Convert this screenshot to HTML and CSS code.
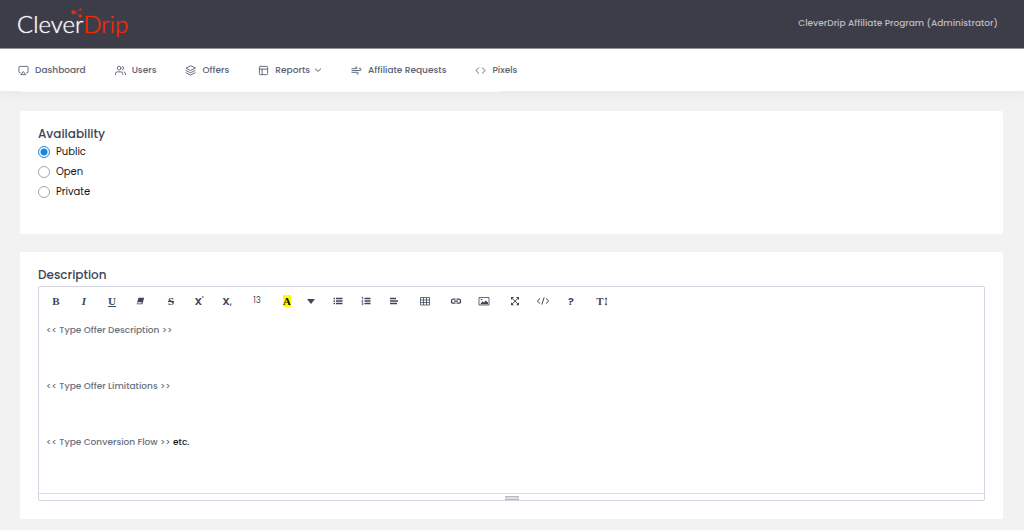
FILE: index.html
```html
<!DOCTYPE html>
<html lang="en">
<head>
<meta charset="utf-8">
<title>CleverDrip</title>
<link rel="stylesheet" href="styles.css">
</head>
<body>
<header class="topbar">
  <a class="logo" href="#">Clever<span class="logo-accent">Drip</span>
    <svg class="logo-mark" viewBox="0 0 12 10" width="12" height="10"><path d="M9.500 1.500 2.500 4.300 9.200 8" fill="none" stroke="#b83a2a" stroke-width=".6"/><circle cx="2.500" cy="4.300" r="2.100"/><circle cx="9.500" cy="1.500" r="1.100"/><circle cx="9.200" cy="8" r="1.700"/></svg>
  </a>
  <a class="account" href="#">CleverDrip Affiliate Program (Administrator)</a>
</header>
<nav class="nav">
  <a class="nav-item" href="#"><svg class="nav-icon" viewBox="0 0 24 24"><path d="M5 17H4a2 2 0 0 1-2-2V5a2 2 0 0 1 2-2h16a2 2 0 0 1 2 2v10a2 2 0 0 1-2 2h-1"/><path d="m12 15 5 6H7z"/></svg>Dashboard</a>
  <a class="nav-item" href="#"><svg class="nav-icon" viewBox="0 0 24 24"><path d="M17 21v-2a4 4 0 0 0-4-4H5a4 4 0 0 0-4 4v2"/><circle cx="9" cy="7" r="4"/><path d="M23 21v-2a4 4 0 0 0-3-3.870M16 3.130a4 4 0 0 1 0 7.750"/></svg>Users</a>
  <a class="nav-item" href="#"><svg class="nav-icon" viewBox="0 0 24 24"><path d="M12 2 2 7l10 5 10-5zM2 17l10 5 10-5M2 12l10 5 10-5"/></svg>Offers</a>
  <a class="nav-item" href="#"><svg class="nav-icon" viewBox="0 0 24 24"><rect x="3" y="3" width="18" height="18" rx="2"/><path d="M3 9h18M9 21V9"/></svg>Reports<svg class="chevron" viewBox="0 0 24 24"><path d="m4 9 8 7 8-7"/></svg></a>
  <a class="nav-item" href="#"><svg class="nav-icon" viewBox="0 0 24 24"><path d="M9.590 4.590A2 2 0 1 1 11 8H2m10.590 11.410A2 2 0 1 0 14 16H2m15.730-8.270A2.500 2.500 0 1 1 19.500 12H2"/></svg>Affiliate Requests</a>
  <a class="nav-item" href="#"><svg class="nav-icon" viewBox="0 0 24 24"><path d="m16 18 6-6-6-6M8 6l-6 6 6 6"/></svg>Pixels</a>
</nav>
<main class="content">
  <section class="card">
    <fieldset class="availability">
      <legend class="title">Availability</legend>
      <label class="option"><input class="radio" type="radio" name="availability" checked>Public</label>
      <label class="option"><input class="radio" type="radio" name="availability">Open</label>
      <label class="option"><input class="radio" type="radio" name="availability">Private</label>
    </fieldset>
  </section>
  <section class="card">
    <h2 class="title" id="description-title">Description</h2>
    <div class="editor">
      <div class="toolbar" role="toolbar" aria-label="Formatting">
        <div class="group">
          <button class="tool serif" aria-label="Bold">B</button>
          <button class="tool serif italic" aria-label="Italic">I</button>
          <button class="tool serif underline" aria-label="Underline">U</button>
          <button class="tool" aria-label="Remove formatting"><svg class="icon small" viewBox="0 0 12 12"><path d="M4.200 2H11L8.800 10H2z" fill="currentColor"/><path d="m3.200 7.400-.5 1.700h5l.5-1.700z" fill="#fff"/></svg></button>
        </div>
        <div class="group">
          <button class="tool serif strike" aria-label="Strikethrough">S</button>
          <button class="tool" aria-label="Superscript">X<sup>'</sup></button>
          <button class="tool" aria-label="Subscript">X<sub>,</sub></button>
        </div>
        <div class="group"><button class="tool size" aria-label="Font size">13</button></div>
        <div class="group">
          <button class="tool serif" aria-label="Text colour"><span class="mark">A</span></button>
          <button class="tool caret" aria-label="More colours"><svg class="icon" viewBox="0 0 12 12"><path d="M2 4h8L6 9z" fill="currentColor"/></svg></button>
        </div>
        <div class="group">
          <button class="tool" aria-label="Bulleted list"><svg class="icon small" viewBox="0 0 10 10"><path d="M3 2.500h6.500M3 5h6.500M3 7.500h6.500M.6 2.500H2M.6 5H2M.6 7.500H2" stroke="currentColor" stroke-width="1.400"/></svg></button>
          <button class="tool" aria-label="Numbered list"><svg class="icon small" viewBox="0 0 10 10"><path d="M3.500 2.500h6M3.500 5h6M3.500 7.500h6" stroke="currentColor" stroke-width="1.400"/><path d="m.8 1.600.9-.5v2.200M.8 4.300h1L.8 6H2M.8 7h1.100v1.700H.8" fill="none" stroke="currentColor" stroke-width=".8"/></svg></button>
          <button class="tool" aria-label="Align"><svg class="icon small" viewBox="0 0 10 10"><path d="M1 2.500h6M1 5h8M1 7.500h7" stroke="currentColor" stroke-width="1.400"/></svg></button>
        </div>
        <div class="group"><button class="tool" aria-label="Table"><svg class="icon" viewBox="0 0 12 12"><path d="M1.500 2.500h9v7.500h-9zM1.500 5h9M1.500 7.500h9M4.500 2.500V10M7.500 2.500V10" fill="none" stroke="currentColor" stroke-width=".8"/></svg></button></div>
        <div class="group">
          <button class="tool" aria-label="Link"><svg class="icon" viewBox="0 0 12 12"><path d="M5.500 4.200H3.400a2 2 0 0 0 0 4h2.100M6.500 4.200h2.100a2 2 0 0 1 0 4H6.500M4 6.200h4" fill="none" stroke="currentColor" stroke-width="1.200"/></svg></button>
          <button class="tool" aria-label="Picture"><svg class="icon" viewBox="0 0 12 12"><path d="M1 2.500h10V10H1z" fill="none" stroke="currentColor" stroke-width=".8"/><path d="m2.200 9.200 2.300-3 1.500 1.300 1.800-2 2.200 2v1.700z" fill="currentColor"/><circle cx="3.500" cy="4.500" r=".8" fill="currentColor"/></svg></button>
        </div>
        <div class="group">
          <button class="tool" aria-label="Full screen"><svg class="icon" viewBox="0 0 12 12"><path d="m3 3.200 6 6m0-6-6 6" stroke="currentColor" stroke-width="1"/><path d="M2 2h3L2 5zM10 2v3L7 2zM2 10.200v-3l3 3zM10 10.200H7l3-3z" fill="currentColor"/></svg></button>
          <button class="tool" aria-label="Code view"><svg class="icon wide" viewBox="0 0 14 12"><path d="M4 3.500 1.300 6 4 8.500M10 3.500 12.700 6 10 8.500M8.200 2.500 5.800 9.500" fill="none" stroke="currentColor" stroke-width="1"/></svg></button>
          <button class="tool" aria-label="Help">?</button>
        </div>
        <div class="group"><button class="tool serif" aria-label="Line height">T<svg class="height-icon" viewBox="0 0 4 10"><path d="M2 1v8" stroke="currentColor" stroke-width=".8"/><path d="m.5 2.500 1.500-2 1.500 2zM.5 7.500l1.500 2 1.500-2z" fill="currentColor"/></svg></button></div>
      </div>
      <div class="editable" contenteditable="true" role="textbox" aria-multiline="true" aria-labelledby="description-title">
        <p>&lt;&lt; Type Offer Description &gt;&gt;</p>
        <p><br></p>
        <p>&lt;&lt; Type Offer Limitations &gt;&gt;</p>
        <p><br></p>
        <p>&lt;&lt; Type Conversion Flow &gt;&gt; <span class="typed">etc.</span></p>
      </div>
      <div class="resize"><span class="grip"></span></div>
    </div>
  </section>
</main>
</body>
</html>
```
FILE: styles.css
```css
* { box-sizing: border-box; }
body {
  margin: 0;
  background: #f2f2f2;
  color: #3d4659;
  font-family: Poppins, Inter, sans-serif;
  font-size: 9px;
  font-weight: 500;
}
a { color: inherit; text-decoration: none; }

.topbar {
  display: flex;
  align-items: center;
  justify-content: space-between;
  height: 49px;
  padding: 0 26px 2px 17px;
  background: #3d3d49;
  border-bottom: 1px solid #96949d;
}
.logo {
  position: relative;
  color: #f4f4f5;
  font-family: Lato, sans-serif;
  font-size: 24px;
  font-weight: 300;
  line-height: 30px;
  padding-top: 1px;
  text-shadow: 0 0 1px currentColor;
}
.logo-accent { color: #f02b08; }
.logo-mark { position: absolute; left: 54px; top: 0; fill: #f02b08; }
.account { color: #bcbcc3; line-height: 16px; }

.nav {
  position: relative;
  display: flex;
  align-items: center;
  gap: 29px;
  height: 42px;
  padding: 0 18px;
  background: #fff;
  color: #596273;
  box-shadow: 0 1px 12px rgba(60, 75, 70, .08);
}
.nav::after {
  content: "";
  position: absolute;
  left: 20px;
  top: 100%;
  width: 47%;
  height: 1px;
  background: #fafafa;
}
.nav-item { display: flex; align-items: center; line-height: 16px; }
.nav-icon, .chevron { fill: none; stroke: currentColor; stroke-width: 2; stroke-linecap: round; stroke-linejoin: round; }
.nav-icon { width: 11px; height: 11px; margin-right: 6px; }
.chevron { width: 8px; height: 8px; margin-left: 4px; stroke-width: 3; }

.content {
  display: flex;
  flex-direction: column;
  gap: 18px;
  padding: 20px 21px 11px 20px;
}
.card { padding: 14px 18px 18px; background: #fff; border-radius: 2px; }
.title {
  margin: 0;
  padding: 0;
  color: #3d4659;
  font-size: 12px;
  font-weight: 500;
  line-height: 17px;
}
.availability { margin: 0; padding: 0 0 14px; border: 0; }
.option {
  display: flex;
  align-items: center;
  gap: 6px;
  height: 20px;
  color: #161616;
  font-size: 10px;
  font-weight: 400;
}
.radio {
  appearance: none;
  width: 12px;
  height: 12px;
  margin: 0;
  border: 1px solid #a5a5a5;
  border-radius: 50%;
  background: #fff;
}
.radio:checked { border-color: #1b86dc; background: radial-gradient(circle, #1b86dc 3px, #fff 4px); }

.editor {
  margin-top: 3px;
  border: 1px solid #cfd6df;
  border-radius: 2px;
}
.toolbar { display: flex; flex-wrap: wrap; gap: 3px; padding: 4px 3px; }
.group { display: flex; }
.tool {
  display: flex;
  align-items: center;
  justify-content: center;
  width: 28px;
  height: 20px;
  padding: 0;
  border: 0;
  background: none;
  color: #3d4659;
  font-family: inherit;
  font-size: 11px;
  font-weight: 600;
  line-height: 12px;
}
.tool sup, .tool sub { font-size: 8px; line-height: 8px; }
.tool sup { align-self: flex-start; padding-top: 6px; }
.tool sub { align-self: flex-end; padding-bottom: 4px; }
.serif { font-family: "Liberation Serif", serif; font-weight: 700; }
.italic { font-style: italic; }
.underline { text-decoration: underline; }
.strike { text-decoration: line-through; }
.size { width: 26px; font-size: 8px; font-weight: 400; }
.caret { width: 20px; }
.mark { background: #ff0; color: #111; line-height: 12px; }
.icon { width: 12px; height: 12px; }
.small { width: 10px; height: 10px; }
.wide { width: 14px; }
.height-icon { width: 4px; height: 9px; }

.editable {
  min-height: 178px;
  padding: 7px;
  color: #68727e;
  outline: 0;
}
.editable p { margin: 0 0 12px; line-height: 16px; }
.typed { color: #161616; }
.resize {
  display: flex;
  justify-content: center;
  height: 7px;
  padding-top: 2px;
  border-top: 1px solid #d9dde3;
}
.grip { width: 14px; height: 4px; border: solid #b9b9b9; border-width: 1px 0; background: #dedede; }
```
